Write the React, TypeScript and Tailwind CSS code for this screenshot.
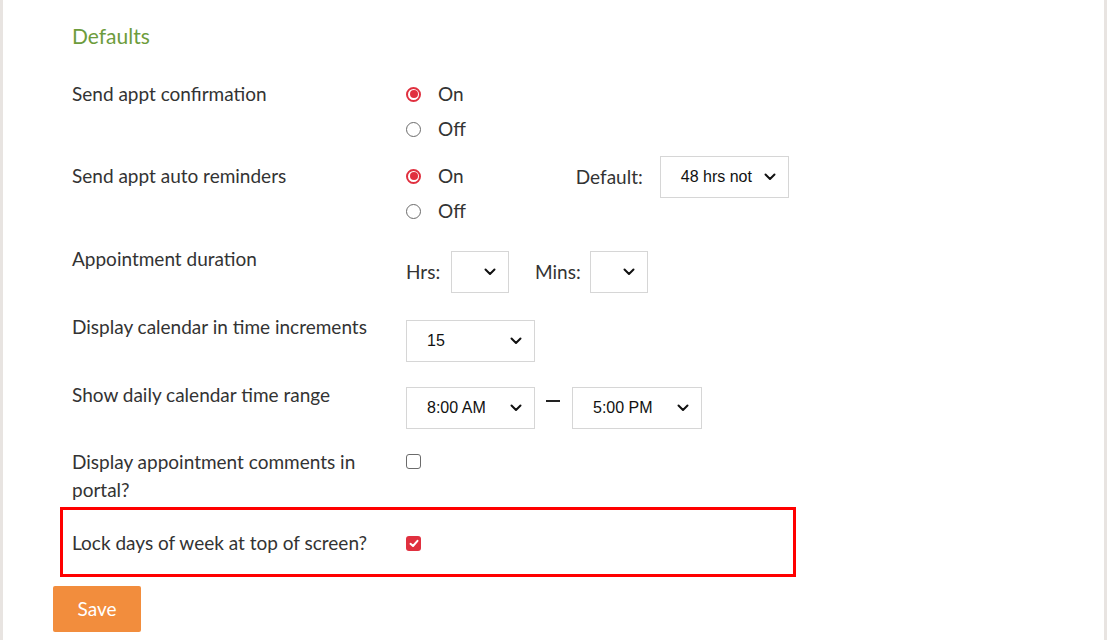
import React from 'react';

const FONT = "font-['Lato','Noto_Sans',sans-serif]";
const LABEL = 'text-[19px] text-[#333] leading-[28px]';

function Chevron() {
  return (
    <svg width="12" height="8" viewBox="0 0 12 8" className="shrink-0">
      <path d="M1.5 1.5 L6 6 L10.5 1.5" fill="none" stroke="#111" strokeWidth="2" strokeLinecap="round" strokeLinejoin="round" />
    </svg>
  );
}

function Select({ value, className }: { value: string; className: string }) {
  return (
    <div className={`flex items-center justify-between border border-[#d6d6d6] bg-white h-[42px] pl-5 pr-3 font-['Liberation_Sans',Arial,sans-serif] text-[16px] text-[#111] ${className}`}>
      <span>{value}</span>
      <Chevron />
    </div>
  );
}

function Radio({ checked, label }: { checked?: boolean; label: string }) {
  return (
    <div className="flex items-center h-[28px]">
      {checked ? (
        <span className="w-[15px] h-[15px] rounded-full border-2 border-[#e0303f] flex items-center justify-center ml-px">
          <span className="w-[8px] h-[8px] rounded-full bg-[#e0303f]" />
        </span>
      ) : (
        <span className="block w-[15px] h-[15px] rounded-full border border-[#6b6b6b] ml-px" />
      )}
      <span className="ml-[17px] text-[19px] text-[#333]">{label}</span>
    </div>
  );
}

function Checkbox({ checked }: { checked?: boolean }) {
  return checked ? (
    <span className="w-[15px] h-[15px] rounded-[3px] bg-[#e0303f] flex items-center justify-center ml-px">
      <svg width="10" height="9" viewBox="0 0 10 9">
        <path d="M1.5 4.8 L4 7 L8.5 1.8" fill="none" stroke="#fff" strokeWidth="2" strokeLinecap="round" strokeLinejoin="round" />
      </svg>
    </span>
  ) : (
    <span className="block w-[15px] h-[15px] rounded-[3px] border border-[#6b6b6b] ml-px" />
  );
}

export default function App() {
  return (
    <div className={`w-[1107px] h-[640px] bg-[#e8e4e1] px-[3px] overflow-hidden ${FONT}`}>
      <div className="bg-white h-full pl-[69px] pt-[22px]">
        <h2 className="text-[21px] text-[#6d9c3c] leading-[28px]">Defaults</h2>

        {/* confirmation */}
        <div className="mt-[30px] flex items-start">
          <div className={`w-[333px] ${LABEL}`}>Send appt confirmation</div>
          <div className="flex flex-col gap-[7px]">
            <Radio checked label="On" />
            <Radio label="Off" />
          </div>
        </div>

        {/* reminders */}
        <div className="mt-[19px] flex items-start">
          <div className={`w-[333px] ${LABEL}`}>Send appt auto reminders</div>
          <div className="flex flex-col gap-[7px]">
            <Radio checked label="On" />
            <Radio label="Off" />
          </div>
          <div className="flex items-center -mt-[6px] ml-[110px]">
            <span className="text-[19px] text-[#333] w-[84px]">Default:</span>
            <Select value="48 hrs not" className="w-[129px]" />
          </div>
        </div>

        {/* duration */}
        <div className="mt-[20px] flex items-start">
          <div className={`w-[334px] ${LABEL}`}>Appointment duration</div>
          <div className="flex items-center mt-[6px]">
            <span className="text-[19px] text-[#333] w-[45px]">Hrs:</span>
            <Select value="" className="w-[58px]" />
            <span className="text-[19px] text-[#333] w-[55px] ml-[26px]">Mins:</span>
            <Select value="" className="w-[58px]" />
          </div>
        </div>

        {/* increments */}
        <div className="mt-[20px] flex items-start">
          <div className={`w-[334px] ${LABEL}`}>Display calendar in time increments</div>
          <Select value="15" className="w-[129px] mt-[7px]" />
        </div>

        {/* time range */}
        <div className="mt-[19px] flex items-start">
          <div className={`w-[334px] ${LABEL}`}>Show daily calendar time range</div>
          <div className="flex items-start mt-[6px]">
            <Select value="8:00 AM" className="w-[129px]" />
            <span className="w-[14px] h-[2px] bg-[#222] ml-[11px] mr-[12px] mt-[13px]" />
            <Select value="5:00 PM" className="w-[130px]" />
          </div>
        </div>

        {/* comments */}
        <div className="mt-[19px] flex items-start">
          <div className={`w-[300px] ${LABEL}`}>Display appointment comments in portal?</div>
          <div className="ml-[33px] mt-[6px]"><Checkbox /></div>
        </div>

        {/* lock days */}
        <div className="mt-[3px] -ml-[12px] w-[736px] h-[70px] border-[3px] border-[#ff0000] flex items-center pl-[9px] pt-[2px]">
          <div className={`w-[333px] ${LABEL}`}>Lock days of week at top of screen?</div>
          <Checkbox checked />
        </div>

        <button className="mt-[9px] -ml-[19px] w-[88px] h-[46px] bg-[#f28d3d] rounded-[2px] text-white text-[19px]">Save</button>
      </div>
    </div>
  );
}
